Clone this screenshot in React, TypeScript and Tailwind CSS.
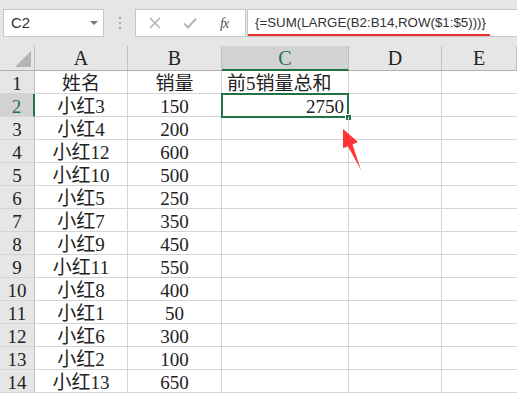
import React from 'react';

const rows: [string, string][] = [
  ['姓名', '销量'],
  ['小红3', '150'],
  ['小红4', '200'],
  ['小红12', '600'],
  ['小红10', '500'],
  ['小红5', '250'],
  ['小红7', '350'],
  ['小红9', '450'],
  ['小红11', '550'],
  ['小红8', '400'],
  ['小红1', '50'],
  ['小红6', '300'],
  ['小红2', '100'],
  ['小红13', '650'],
];

const cellFont = { fontFamily: '"Liberation Serif", "Noto Sans CJK SC", serif' };

const App: React.FC = () => {
  return (
    <div className="w-[517px] h-[398px] overflow-hidden bg-white relative text-[#222]" style={cellFont}>
      {/* formula bar */}
      <div className="h-[46px] bg-[#e6e6e6] flex items-start pt-[9px]">
        <div
          className="ml-[3px] w-[101px] h-[28px] bg-white border border-[#c6c6c6] flex items-center justify-between pl-[7px] pr-[5px] text-[15px] text-[#333]"
          style={{ fontFamily: '"Liberation Sans", sans-serif' }}
        >
          <span>C2</span>
          <svg width="8" height="5" viewBox="0 0 8 5"><polygon points="0,0 8,0 4,4" fill="#777" /></svg>
        </div>
        <div className="w-[31px] h-[28px] flex flex-col items-center justify-center gap-[3px]">
          <div className="w-[2px] h-[2px] bg-[#a8a8a8]" />
          <div className="w-[2px] h-[2px] bg-[#a8a8a8]" />
          <div className="w-[2px] h-[2px] bg-[#a8a8a8]" />
        </div>
        <div className="w-[111px] h-[28px] bg-white border border-[#c6c6c6] flex items-center pl-[12px]">
          <svg width="12" height="12" viewBox="0 0 12 12" className="ml-[1px]">
            <path d="M1 1 L11 11 M11 1 L1 11" stroke="#b5b5b5" strokeWidth="1.6" />
          </svg>
          <svg width="14" height="12" viewBox="0 0 14 12" className="ml-[22px]">
            <path d="M1 6.5 L5 10.5 L13 1.5" stroke="#b5b5b5" strokeWidth="2" fill="none" />
          </svg>
          <span className="ml-[23px] italic text-[14px] text-[#555] tracking-[-1px]" style={{ fontFamily: '"Liberation Serif", serif' }}>
            fx
          </span>
        </div>
        <div className="flex-1 ml-[1px] h-[28px] bg-white border-y border-l border-[#c6c6c6] relative flex items-center pl-[7px]">
          <span className="text-[13.3px] text-[#333] leading-none" style={{ fontFamily: '"Liberation Sans", sans-serif' }}>
            {'{=SUM(LARGE(B2:B14,ROW($1:$5)))}'}
          </span>
          <div className="absolute left-0 top-[24px] w-[242px] h-[2px] bg-[#ee3131]" />
        </div>
      </div>

      {/* column headers */}
      <div className="flex h-[25px] bg-[#e6e6e6] border-b border-[#b0b0b0]">
        <div className="w-[35px] border-r border-[#c0c0c0] relative">
          <svg width="17" height="17" viewBox="0 0 17 17" className="absolute left-[15px] top-[5px]">
            <polygon points="16,0 16,16 0,16" fill="#b4b4b4" />
          </svg>
        </div>
        {['A', 'B', 'C', 'D', 'E'].map((c, i) => (
          <div
            key={c}
            className={`${['w-[93px]', 'w-[94px]', 'w-[127px]', 'w-[93px]', 'flex-1'][i]} flex items-center justify-center text-[20px] leading-[24px] border-r border-[#c0c0c0] ${
              c === 'C' ? 'bg-[#d2d2d2] text-[#217346] border-b-2 border-b-[#217346] -mb-px' : 'text-[#222]'
            }`}
          >
            {c}
          </div>
        ))}
      </div>

      {/* rows */}
      {rows.map(([name, sales], idx) => {
        const r = idx + 1;
        return (
          <div key={r} className="flex h-[23px] text-[19px] leading-[25px]">
            <div
              className={`w-[35px] flex justify-center border-b border-[#d4d4d4] ${
                r === 2 ? 'bg-[#d2d2d2] text-[#217346] border-r-2 border-r-[#217346]' : 'bg-[#e6e6e6] border-r border-r-[#c0c0c0]'
              }`}
            >
              {r}
            </div>
            <div className="w-[93px] flex justify-center border-r border-b border-[#d4d4d4] overflow-hidden">{name}</div>
            <div className="w-[94px] flex justify-center border-r border-b border-[#d4d4d4] overflow-hidden">{sales}</div>
            <div className="w-[127px] flex border-r border-b border-[#d4d4d4] relative">
              {r === 1 && <span className="pl-[5px] whitespace-nowrap">前5销量总和</span>}
              {r === 2 && (
                <>
                  <span className="ml-auto pr-[4px]">2750</span>
                  <div className="absolute -left-[1px] -top-[1px] w-[128px] h-[25px] border-2 border-[#217346]" />
                  <div className="absolute left-[123px] top-[20px] w-[7px] h-[7px] bg-[#217346] border border-white" />
                </>
              )}
            </div>
            <div className="w-[93px] border-r border-b border-[#d4d4d4]" />
            <div className="flex-1 border-b border-[#d4d4d4]" />
          </div>
        );
      })}

      {/* annotation arrow */}
      <svg className="absolute left-0 top-0 pointer-events-none" width="517" height="398">
        <polygon points="343,129 358,142 352.5,144.5 361,170 348,146.5 343,148" fill="#ff3535" />
      </svg>
    </div>
  );
};

export default App;
